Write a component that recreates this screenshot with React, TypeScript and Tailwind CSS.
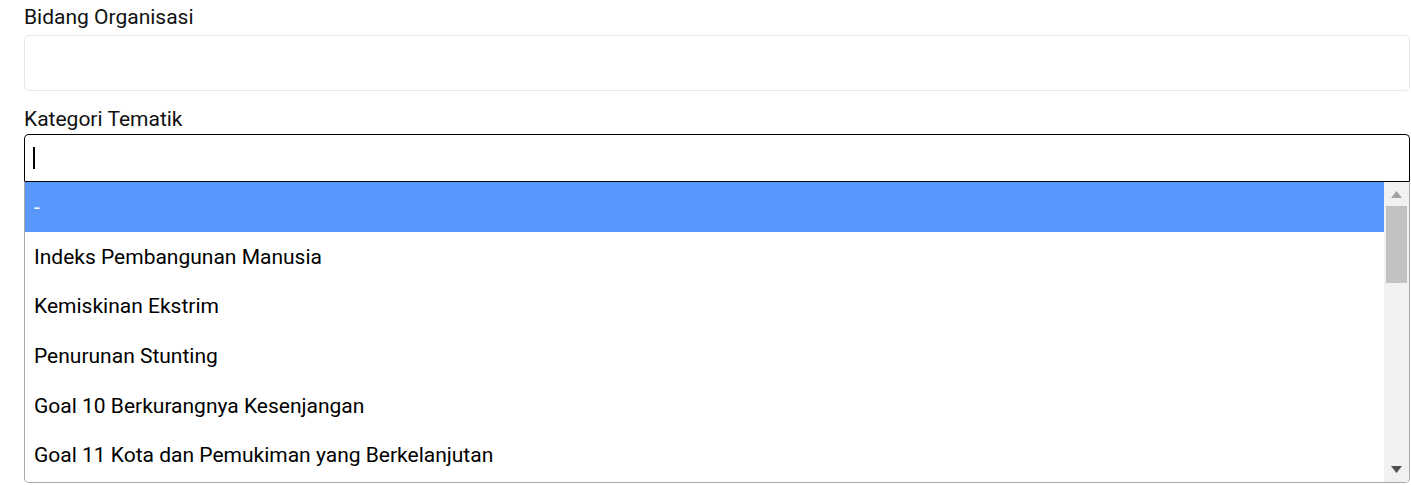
import React from "react";

const items = [
  "-",
  "Indeks Pembangunan Manusia",
  "Kemiskinan Ekstrim",
  "Penurunan Stunting",
  "Goal 10 Berkurangnya Kesenjangan",
  "Goal 11 Kota dan Pemukiman yang Berkelanjutan",
];

export default function App() {
  return (
    <div
      className="w-[1411px] h-[485px] bg-white pl-[24px] pr-[1px] overflow-hidden text-[#111]"
      style={{ fontFamily: "Roboto, 'Noto Sans', sans-serif" }}
    >
      <div className="pt-[2px] text-[21px] leading-[30px]">Bidang Organisasi</div>
      <div className="mt-[3px] h-[56px] border border-[#e6e6e6] rounded-[5px] bg-white" />
      <div className="mt-[13px] text-[21px] leading-[30px]">Kategori Tematik</div>
      <div className="h-[47px] border border-black border-b-0 rounded-t-[5px] flex items-center pl-[8px]">
        <div className="w-[2px] h-[22px] bg-black" />
      </div>
      <div className="h-[302px] border border-[#aaaaaa] border-t-black rounded-b-[5px] flex overflow-hidden">
        <div className="flex-1 flex flex-col">
          {items.map((t, i) => (
            <div
              key={i}
              className={`h-[49.6px] shrink-0 flex items-center pl-[9px] pt-[1px] text-[21px] leading-[30px] ${
                i === 0 ? "bg-[#5897fb] text-white" : "text-black"
              }`}
            >
              {t}
            </div>
          ))}
        </div>
        <div className="w-[25px] bg-[#f1f1f1] flex flex-col items-center">
          <div className="h-[24px] w-full flex items-center justify-center">
            <svg width="11" height="7" viewBox="0 0 11 7">
              <polygon points="5.5,0 11,7 0,7" fill="#a3a3a3" />
            </svg>
          </div>
          <div className="w-[21px] h-[77px] bg-[#c1c1c1]" />
          <div className="flex-1" />
          <div className="h-[26px] w-full flex items-center justify-center">
            <svg width="11" height="7" viewBox="0 0 11 7">
              <polygon points="0,0 11,0 5.5,7" fill="#505050" />
            </svg>
          </div>
        </div>
      </div>
    </div>
  );
}
